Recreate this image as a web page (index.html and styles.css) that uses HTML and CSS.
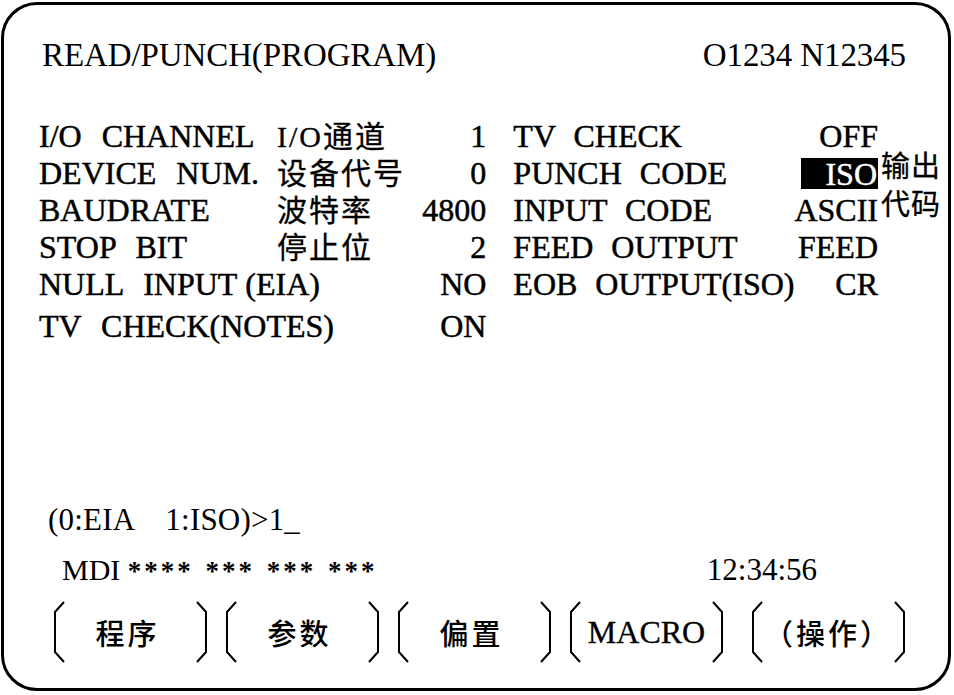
FILE: index.html
```html
<!DOCTYPE html>
<html lang="zh-CN">
<head>
<meta charset="utf-8">
<title>READ/PUNCH(PROGRAM)</title>
<link rel="stylesheet" href="styles.css">
</head>
<body>
<div class="screen">
  <header class="head">
    <span class="title">READ/PUNCH(PROGRAM)</span>
    <span class="prog">O1234 N12345</span>
  </header>

  <section class="settings">
    <div class="col-left">
      <div class="row"><span class="en">I/O CHANNEL</span><span class="cn">I/O通道</span><span class="val">1</span></div>
      <div class="row"><span class="en">DEVICE NUM.</span><span class="cn">设备代号</span><span class="val">0</span></div>
      <div class="row"><span class="en">BAUDRATE</span><span class="cn">波特率</span><span class="val">4800</span></div>
      <div class="row"><span class="en">STOP BIT</span><span class="cn">停止位</span><span class="val">2</span></div>
      <div class="row"><span class="en wide">NULL INPUT<span class="tight"> (EIA)</span></span><span class="val">NO</span></div>
      <div class="row last"><span class="en wide">TV CHECK(NOTES)</span><span class="val">ON</span></div>
    </div>
    <div class="col-right">
      <span class="lbl">TV CHECK</span><span class="rval">OFF</span>
      <span class="lbl">PUNCH CODE</span><span class="rval"><span class="hl">ISO</span></span>
      <span class="lbl">INPUT CODE</span><span class="rval">ASCII</span>
      <span class="lbl">FEED OUTPUT</span><span class="rval">FEED</span>
      <span class="lbl">EOB OUTPUT(ISO)</span><span class="rval">CR</span>
      <span class="note">输出<br>代码</span>
    </div>
  </section>

  <div class="prompt">(0:EIA    1:ISO)&gt;1_</div>

  <div class="status">
    <span class="mode">MDI <span class="stars">**** *** *** ***</span></span>
    <span class="clock">12:34:56</span>
  </div>

  <nav class="softkeys">
    <div class="key">
      <svg class="br" viewBox="0 0 14 62"><path d="M12 1 L3 11 L3 51 L12 61"/></svg>
      <span class="klabel">程序</span>
      <svg class="br" viewBox="0 0 14 62"><path d="M2 1 L11 11 L11 51 L2 61"/></svg>
    </div>
    <div class="key">
      <svg class="br" viewBox="0 0 14 62"><path d="M12 1 L3 11 L3 51 L12 61"/></svg>
      <span class="klabel">参数</span>
      <svg class="br" viewBox="0 0 14 62"><path d="M2 1 L11 11 L11 51 L2 61"/></svg>
    </div>
    <div class="key">
      <svg class="br" viewBox="0 0 14 62"><path d="M12 1 L3 11 L3 51 L12 61"/></svg>
      <span class="klabel">偏置</span>
      <svg class="br" viewBox="0 0 14 62"><path d="M2 1 L11 11 L11 51 L2 61"/></svg>
    </div>
    <div class="key">
      <svg class="br" viewBox="0 0 14 62"><path d="M12 1 L3 11 L3 51 L12 61"/></svg>
      <span class="klabel latin">MACRO</span>
      <svg class="br" viewBox="0 0 14 62"><path d="M2 1 L11 11 L11 51 L2 61"/></svg>
    </div>
    <div class="key key-last">
      <svg class="br" viewBox="0 0 14 62"><path d="M12 1 L3 11 L3 51 L12 61"/></svg>
      <span class="klabel">（操作）</span>
      <svg class="br" viewBox="0 0 14 62"><path d="M2 1 L11 11 L11 51 L2 61"/></svg>
    </div>
  </nav>
</div>
</body>
</html>
```

FILE: styles.css
```css
html, body {
  margin: 0;
  padding: 0;
  background: #fff;
}

body {
  font-family: "Liberation Serif", "Noto Sans CJK SC", serif;
  color: #000;
}

.screen {
  box-sizing: border-box;
  width: 950px;
  height: 689px;
  margin: 2px 0 0 1px;
  border: 3px solid #000;
  border-radius: 36px;
  background: #fff;
  overflow: hidden;
}

/* header */
.head {
  display: flex;
  justify-content: space-between;
  align-items: center;
  margin-top: 30px;
  padding: 0 42px 0 38px;
  height: 40px;
  font-size: 33px;
  line-height: 40px;
  letter-spacing: -0.1px;
}

/* settings block */
.settings {
  display: flex;
  margin-top: 43px;
  padding-left: 35px;
}

.col-left {
  width: 448px;
  font-size: 32px;
  -webkit-text-stroke: 0.5px #000;
}

.row {
  display: grid;
  grid-template-columns: 238px 1fr auto;
  align-items: center;
  height: 37px;
  line-height: 37px;
  white-space: pre;
}

.row.last {
  margin-top: 5px;
}

.en {
  word-spacing: 12px;
}

.en .tight {
  word-spacing: 0;
}

.en.wide {
  grid-column: 1 / 3;
}

.cn {
  font-size: 30px;
  letter-spacing: 2px;
  -webkit-text-stroke: 0.3px #000;
}

.val {
  grid-column: 3;
  text-align: right;
}

.col-right {
  flex: 1;
  display: grid;
  grid-template-columns: 1fr auto 70px;
  grid-auto-rows: 37px;
  align-items: center;
  margin-left: 27px;
  font-size: 32px;
  line-height: 37px;
  -webkit-text-stroke: 0.5px #000;
}

.lbl {
  grid-column: 1;
  word-spacing: 10px;
  white-space: pre;
}

.rval {
  grid-column: 2;
  display: flex;
  justify-content: flex-end;
  align-items: center;
  height: 37px;
}

.hl {
  display: block;
  background: #000;
  color: #fff;
  -webkit-text-stroke: 0.5px #fff;
  padding: 0 1px 0 24px;
  height: 31px;
  line-height: 33px;
}

.note {
  grid-column: 3;
  grid-row: 1 / 4;
  align-self: start;
  padding: 27px 0 0 3px;
  font-family: "Noto Sans CJK SC", sans-serif;
  font-size: 29px;
  line-height: 38px;
  letter-spacing: 1px;
  -webkit-text-stroke: 0.3px #000;
}

/* prompt & status */
.prompt {
  margin-top: 158px;
  padding-left: 44px;
  height: 34px;
  line-height: 34px;
  font-size: 31px;
  white-space: pre;
  letter-spacing: 0.2px;
}

.status {
  display: flex;
  align-items: center;
  margin-top: 16px;
  padding: 0 131px 0 58px;
  height: 34px;
  line-height: 34px;
  font-size: 30px;
}

.stars {
  font-size: 27px;
  font-weight: bold;
  letter-spacing: 3px;
  word-spacing: 2px;
}

.clock {
  margin-left: auto;
  font-size: 31px;
}

/* softkeys */
.softkeys {
  display: flex;
  gap: 15px;
  margin-top: 14px;
  padding-left: 48px;
  height: 62px;
}

.key {
  display: flex;
  align-items: center;
  justify-content: space-between;
  width: 157px;
  height: 62px;
}

.key-last {
  margin-left: 10px;
}

.br {
  width: 14px;
  height: 62px;
  flex: none;
}

.br path {
  fill: none;
  stroke: #000;
  stroke-width: 2;
  stroke-linejoin: miter;
}

.klabel {
  font-family: "Noto Sans CJK SC", sans-serif;
  font-size: 29px;
  font-weight: 500;
  letter-spacing: 3px;
  line-height: 40px;
  margin-right: 6px;
}

.klabel.latin {
  font-family: "Liberation Serif", serif;
  font-size: 32px;
  font-weight: normal;
  letter-spacing: 0;
  margin-right: 0;
  -webkit-text-stroke: 0.3px #000;
}
```
